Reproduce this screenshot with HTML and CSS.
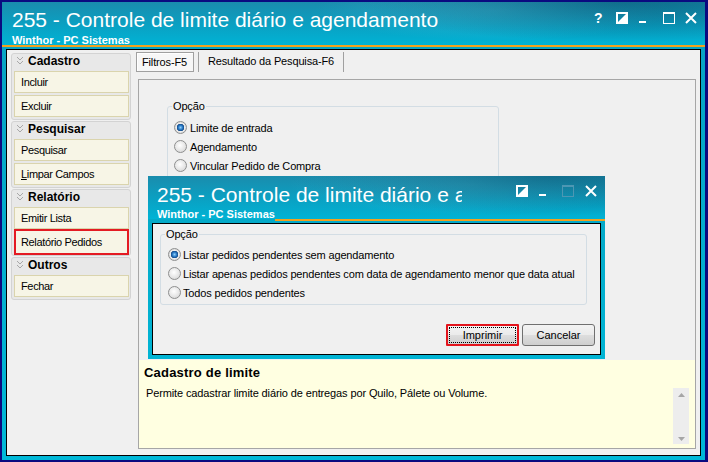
FILE: index.html
```html
<!DOCTYPE html>
<html lang="pt-BR">
<head>
    <meta charset="UTF-8">
    <title>255 - Controle de limite diário e agendamento</title>
    <link rel="stylesheet" href="styles.css">
</head>
<body>

<div class="window">
    <div class="titlebar">
        <div class="title-text">
            <div class="title">255 - Controle de limite diário e agendamento</div>
            <div class="subtitle">Winthor - PC Sistemas</div>
        </div>
        <div class="caption-buttons">
            <span class="cap-help">?</span>
            <svg class="cap-restore" width="12" height="12" viewBox="0 0 12 12"><rect x="1" y="1" width="10" height="10" fill="none" stroke="#fff" stroke-width="2"/><path d="M11 1 L11 11 L1 11 Z" fill="#fff"/></svg>
            <svg class="cap-min" width="7" height="12" viewBox="0 0 7 12"><rect x="0" y="9" width="7" height="2" fill="#fff"/></svg>
            <svg class="cap-max" width="12" height="12" viewBox="0 0 12 12"><rect x="0.5" y="1.5" width="11" height="10" fill="none" stroke="#fff"/><rect x="0" y="0" width="12" height="2" fill="#fff"/></svg>
            <svg class="cap-close" width="12" height="12" viewBox="0 0 12 12"><path d="M1 1 L11 11 M11 1 L1 11" stroke="#fff" stroke-width="2"/></svg>
        </div>
    </div>
    <div class="accent-line"></div>

    <div class="client">
        <div class="sidebar">
            <div class="group">
                <div class="group-head"><svg class="chevrons" width="8" height="10" viewBox="0 0 8 10"><polyline points="1,1 4,4 7,1" fill="none" stroke="#a8a8a8"/><polyline points="1,5 4,8 7,5" fill="none" stroke="#a8a8a8"/></svg>Cadastro</div>
                <div class="item">Incluir</div>
                <div class="item">Excluir</div>
            </div>
            <div class="group">
                <div class="group-head"><svg class="chevrons" width="8" height="10" viewBox="0 0 8 10"><polyline points="1,1 4,4 7,1" fill="none" stroke="#a8a8a8"/><polyline points="1,5 4,8 7,5" fill="none" stroke="#a8a8a8"/></svg>Pesquisar</div>
                <div class="item">Pesquisar</div>
                <div class="item"><u>L</u>impar Campos</div>
            </div>
            <div class="group">
                <div class="group-head"><svg class="chevrons" width="8" height="10" viewBox="0 0 8 10"><polyline points="1,1 4,4 7,1" fill="none" stroke="#a8a8a8"/><polyline points="1,5 4,8 7,5" fill="none" stroke="#a8a8a8"/></svg>Relatório</div>
                <div class="item">Emitir Lista</div>
                <div class="item highlight">Relatório Pedidos</div>
            </div>
            <div class="group">
                <div class="group-head"><svg class="chevrons" width="8" height="10" viewBox="0 0 8 10"><polyline points="1,1 4,4 7,1" fill="none" stroke="#a8a8a8"/><polyline points="1,5 4,8 7,5" fill="none" stroke="#a8a8a8"/></svg>Outros</div>
                <div class="item">Fechar</div>
            </div>
        </div>

        <div class="main">
            <div class="tabs">
                <div class="tab active">Filtros-F5</div>
                <div class="tab">Resultado da Pesquisa-F6</div>
            </div>
            <div class="page">
                <div class="filters">
                    <fieldset class="groupbox main-options">
                        <legend>Opção</legend>
                        <div class="radio"><span class="dot on"></span>Limite de entrada</div>
                        <div class="radio"><span class="dot"></span>Agendamento</div>
                        <div class="radio"><span class="dot"></span>Vincular Pedido de Compra</div>
                    </fieldset>
                </div>
                <div class="help">
                    <div class="help-title">Cadastro de limite</div>
                    <div class="help-body">
                        <div class="help-text">Permite cadastrar limite diário de entregas por Quilo, Pálete ou Volume.</div>
                        <div class="scrollbar">
                            <svg width="7" height="4" viewBox="0 0 7 4"><path d="M0 4 L3.5 0 L7 4 Z" fill="#a6a6a6"/></svg>
                            <svg width="7" height="4" viewBox="0 0 7 4"><path d="M0 0 L3.5 4 L7 0 Z" fill="#a6a6a6"/></svg>
                        </div>
                    </div>
                </div>
            </div>
        </div>
    </div>

    <div class="dialog">
        <div class="titlebar dialog-titlebar">
            <div class="title-text dialog-title-text">
                <div class="title">255 - Controle de limite diário e agendamento</div>
                <div class="subtitle">Winthor - PC Sistemas</div>
            </div>
            <div class="caption-buttons">
                <svg class="cap-restore" width="12" height="12" viewBox="0 0 12 12"><rect x="1" y="1" width="10" height="10" fill="none" stroke="#fff" stroke-width="2"/><path d="M11 1 L11 11 L1 11 Z" fill="#fff"/></svg>
                <svg class="cap-min" width="7" height="12" viewBox="0 0 7 12"><rect x="0" y="9" width="7" height="2" fill="#fff"/></svg>
                <svg class="cap-max" width="12" height="12" viewBox="0 0 12 12"><rect x="0.5" y="1.5" width="11" height="10" fill="none" stroke="#4d97b3"/><rect x="0" y="0" width="12" height="2" fill="#4d97b3"/></svg>
                <svg class="cap-close" width="12" height="12" viewBox="0 0 12 12"><path d="M1 1 L11 11 M11 1 L1 11" stroke="#fff" stroke-width="2"/></svg>
            </div>
        </div>
        <div class="accent-line dialog-accent"></div>
        <div class="dialog-body">
            <fieldset class="groupbox dialog-options">
                <legend>Opção</legend>
                <div class="radio"><span class="dot on"></span>Listar pedidos pendentes sem agendamento</div>
                <div class="radio"><span class="dot"></span>Listar apenas pedidos pendentes com data de agendamento menor que data atual</div>
                <div class="radio"><span class="dot"></span>Todos pedidos pendentes</div>
            </fieldset>
            <div class="buttons">
                <button type="button" class="btn btn-focus"><span>Imprimir</span></button>
                <button type="button" class="btn">Cancelar</button>
            </div>
        </div>
    </div>
</div>

</body>
</html>
```

FILE: styles.css
```css
* {
    box-sizing: border-box;
}

body {
    margin: 0;
    font-family: "Liberation Sans", Arial, sans-serif;
    font-size: 11px;
    letter-spacing: -0.15px;
    color: #000;
}

.window {
    position: relative;
    width: 708px;
    height: 462px;
    border: 2px solid #0a0a80;
    border-right-width: 3px;
    background: linear-gradient(#08a2c2, #00b8d8);
    display: flex;
    flex-direction: column;
}

/* title bars */
.titlebar {
    height: 43px;
    flex: none;
    display: flex;
    padding: 0 8px 0 10px;
    color: #fff;
    letter-spacing: 0;
    background:
        radial-gradient(ellipse 260px 40px at 88% 0%, rgba(4, 80, 110, 0.55), rgba(4, 80, 110, 0)),
        radial-gradient(ellipse 180px 30px at 70% 20%, rgba(120, 210, 230, 0.25), rgba(120, 210, 230, 0)),
        linear-gradient(#1a8cad, #0aa1c3 55%, #00b3d5);
}

.title-text {
    white-space: nowrap;
}

.title {
    font-size: 21px;
    line-height: 24px;
    margin-top: 6px;
}

.subtitle {
    font-size: 11px;
    font-weight: bold;
    line-height: 13px;
    margin-top: 2px;
}

.caption-buttons {
    margin-left: auto;
    display: flex;
    align-items: flex-start;
    padding-top: 10px;
}

.caption-buttons svg {
    display: block;
}

.cap-help {
    font-weight: bold;
    font-size: 14px;
    line-height: 12px;
    width: 8px;
}

.cap-restore {
    margin-left: 14px;
}

.cap-min {
    margin-left: 11px;
}

.cap-max {
    margin-left: 17px;
}

.cap-close {
    margin-left: 10px;
}

.accent-line {
    height: 2px;
    flex: none;
    background-color: #f3a21e;
}

/* main window body */
.client {
    flex: 1;
    display: flex;
    margin: 2px 4px 4px 4px;
    border: 1px solid #000;
    background-color: #f0f0f0;
}

.sidebar {
    width: 124px;
    flex: none;
    padding: 3px 0 0 4px;
    display: flex;
    flex-direction: column;
    gap: 1px;
}

.group {
    border: 1px solid #d3d3d3;
    border-radius: 3px;
    background-color: #e8e8e8;
    padding: 0 1px 2px 2px;
    display: flex;
    flex-direction: column;
    gap: 2px;
}

.group-head {
    height: 17px;
    display: flex;
    align-items: center;
    padding-bottom: 3px;
    font-weight: bold;
    font-size: 12px;
    letter-spacing: 0;
    margin-bottom: -2px;
}

.chevrons {
    margin: 0 4px 0 2px;
}

.item {
    height: 22px;
    line-height: 20px;
    padding-left: 6px;
    letter-spacing: -0.35px;
    border: 1px solid #dad4ad;
    background-color: #f7f5e6;
}

.item.highlight {
    height: 26px;
    line-height: 22px;
    margin: -2px 0;
    border: 2px solid #e41b23;
    padding-left: 5px;
}

.main {
    flex: 1;
    display: flex;
    flex-direction: column;
    margin-left: 7px;
    padding: 2px 4px 6px 0;
}

.tabs {
    display: flex;
    height: 20px;
    margin-left: -2px;
}

.tab {
    height: 20px;
    line-height: 18px;
    padding-left: 9px;
    border-left: 1px solid #a0a0a0;
    border-right: 1px solid #a0a0a0;
    width: 146px;
    margin-left: 4px;
}

.tab.active {
    width: 58px;
    margin-left: 0;
    padding-left: 5px;
    border: 1px solid #a0a0a0;
    box-shadow: inset 1px 1px 0 #fff;
    background-color: #f7f7f7;
}

.page {
    flex: 1;
    margin-top: 7px;
    border: 1px solid #a6a6a6;
    display: flex;
    flex-direction: column;
}

.filters {
    height: 280px;
    flex: none;
    padding: 20px 0 0 28px;
}

.groupbox {
    margin: 0;
    padding: 0;
    border: 1px solid #d3dde4;
    border-radius: 3px;
}

.groupbox legend {
    padding: 0 1px;
    margin-left: 4px;
    line-height: 13px;
}

.main-options {
    width: 332px;
    height: 110px;
    padding-top: 5px;
}

.main-options .radio {
    padding-left: 6px;
}

.radio {
    height: 19px;
    display: flex;
    align-items: center;
    gap: 3px;
}

.dot {
    width: 13px;
    height: 13px;
    border-radius: 50%;
    border: 1px solid #8e8f8f;
    background: radial-gradient(circle at 45% 40%, #ffffff, #e6e6e6 55%, #cdcdcd);
}

.dot.on {
    background: radial-gradient(circle at 50% 50%, #8fd0f7 0, #2f7fcb 2px, #124b8a 3.5px, #eeeeee 4px, #d6d6d6 6px);
}

.help {
    flex: 1;
    background-color: #ffffe1;
    padding: 5px 6px 0 5px;
}

.help-title {
    font-size: 13px;
    font-weight: bold;
    line-height: 16px;
    letter-spacing: 0.2px;
}

.help-body {
    display: flex;
    margin-top: 6px;
}

.help-text {
    flex: 1;
    font-size: 11px;
    line-height: 13px;
    letter-spacing: -0.12px;
    padding-left: 2px;
}

.scrollbar {
    width: 16px;
    height: 56px;
    margin-top: 1px;
    background-color: #ededed;
    display: flex;
    flex-direction: column;
    align-items: center;
    justify-content: space-between;
    padding: 5px 0 3px;
}

.scrollbar svg {
    display: block;
}

/* dialog over the filters */
.dialog {
    position: absolute;
    left: 146px;
    top: 174px;
    width: 457px;
    height: 183px;
    display: flex;
    flex-direction: column;
    background: linear-gradient(#06a6c4, #00b4d4);
}

.dialog-titlebar {
    padding-left: 9px;
}

.dialog-title-text {
    width: 305px;
    overflow: hidden;
}

.dialog-title-text .title {
    margin-top: 7px;
}

.dialog-title-text .subtitle {
    margin-top: 1px;
}

.dialog .caption-buttons {
    padding-top: 9px;
}

.dialog .cap-restore {
    margin-left: 0;
}

.dialog .cap-max {
    margin-left: 16px;
}

.dialog .cap-close {
    margin-left: 11px;
}

.dialog-accent {
    margin-left: 127px;
}

.dialog-body {
    flex: 1;
    margin: 2px 4px 4px 4px;
    border: 1px solid #000;
    background-color: #f0f0f0;
    padding: 4px 5px 0 7px;
    display: flex;
    flex-direction: column;
}

.dialog-options {
    margin-right: 8px;
    padding: 4px 0 2px 0;
}

.dialog-options .radio {
    padding-left: 7px;
    gap: 2px;
}

.buttons {
    display: flex;
    justify-content: flex-end;
    gap: 3px;
    margin-top: 19px;
}

.btn {
    width: 73px;
    height: 22px;
    padding: 0;
    font-family: "Liberation Sans", Arial, sans-serif;
    font-size: 11px;
    color: #000;
    border: 1px solid #707070;
    border-radius: 3px;
    background: linear-gradient(#f3f3f3, #ebebeb 48%, #dddddd 52%, #cfcfcf);
}

.btn-focus {
    border: 2px solid #e3141c;
    border-radius: 1px;
    padding: 1px;
}

.btn-focus span {
    display: block;
    height: 100%;
    line-height: 14px;
    border: 1px dotted #000;
}
```
